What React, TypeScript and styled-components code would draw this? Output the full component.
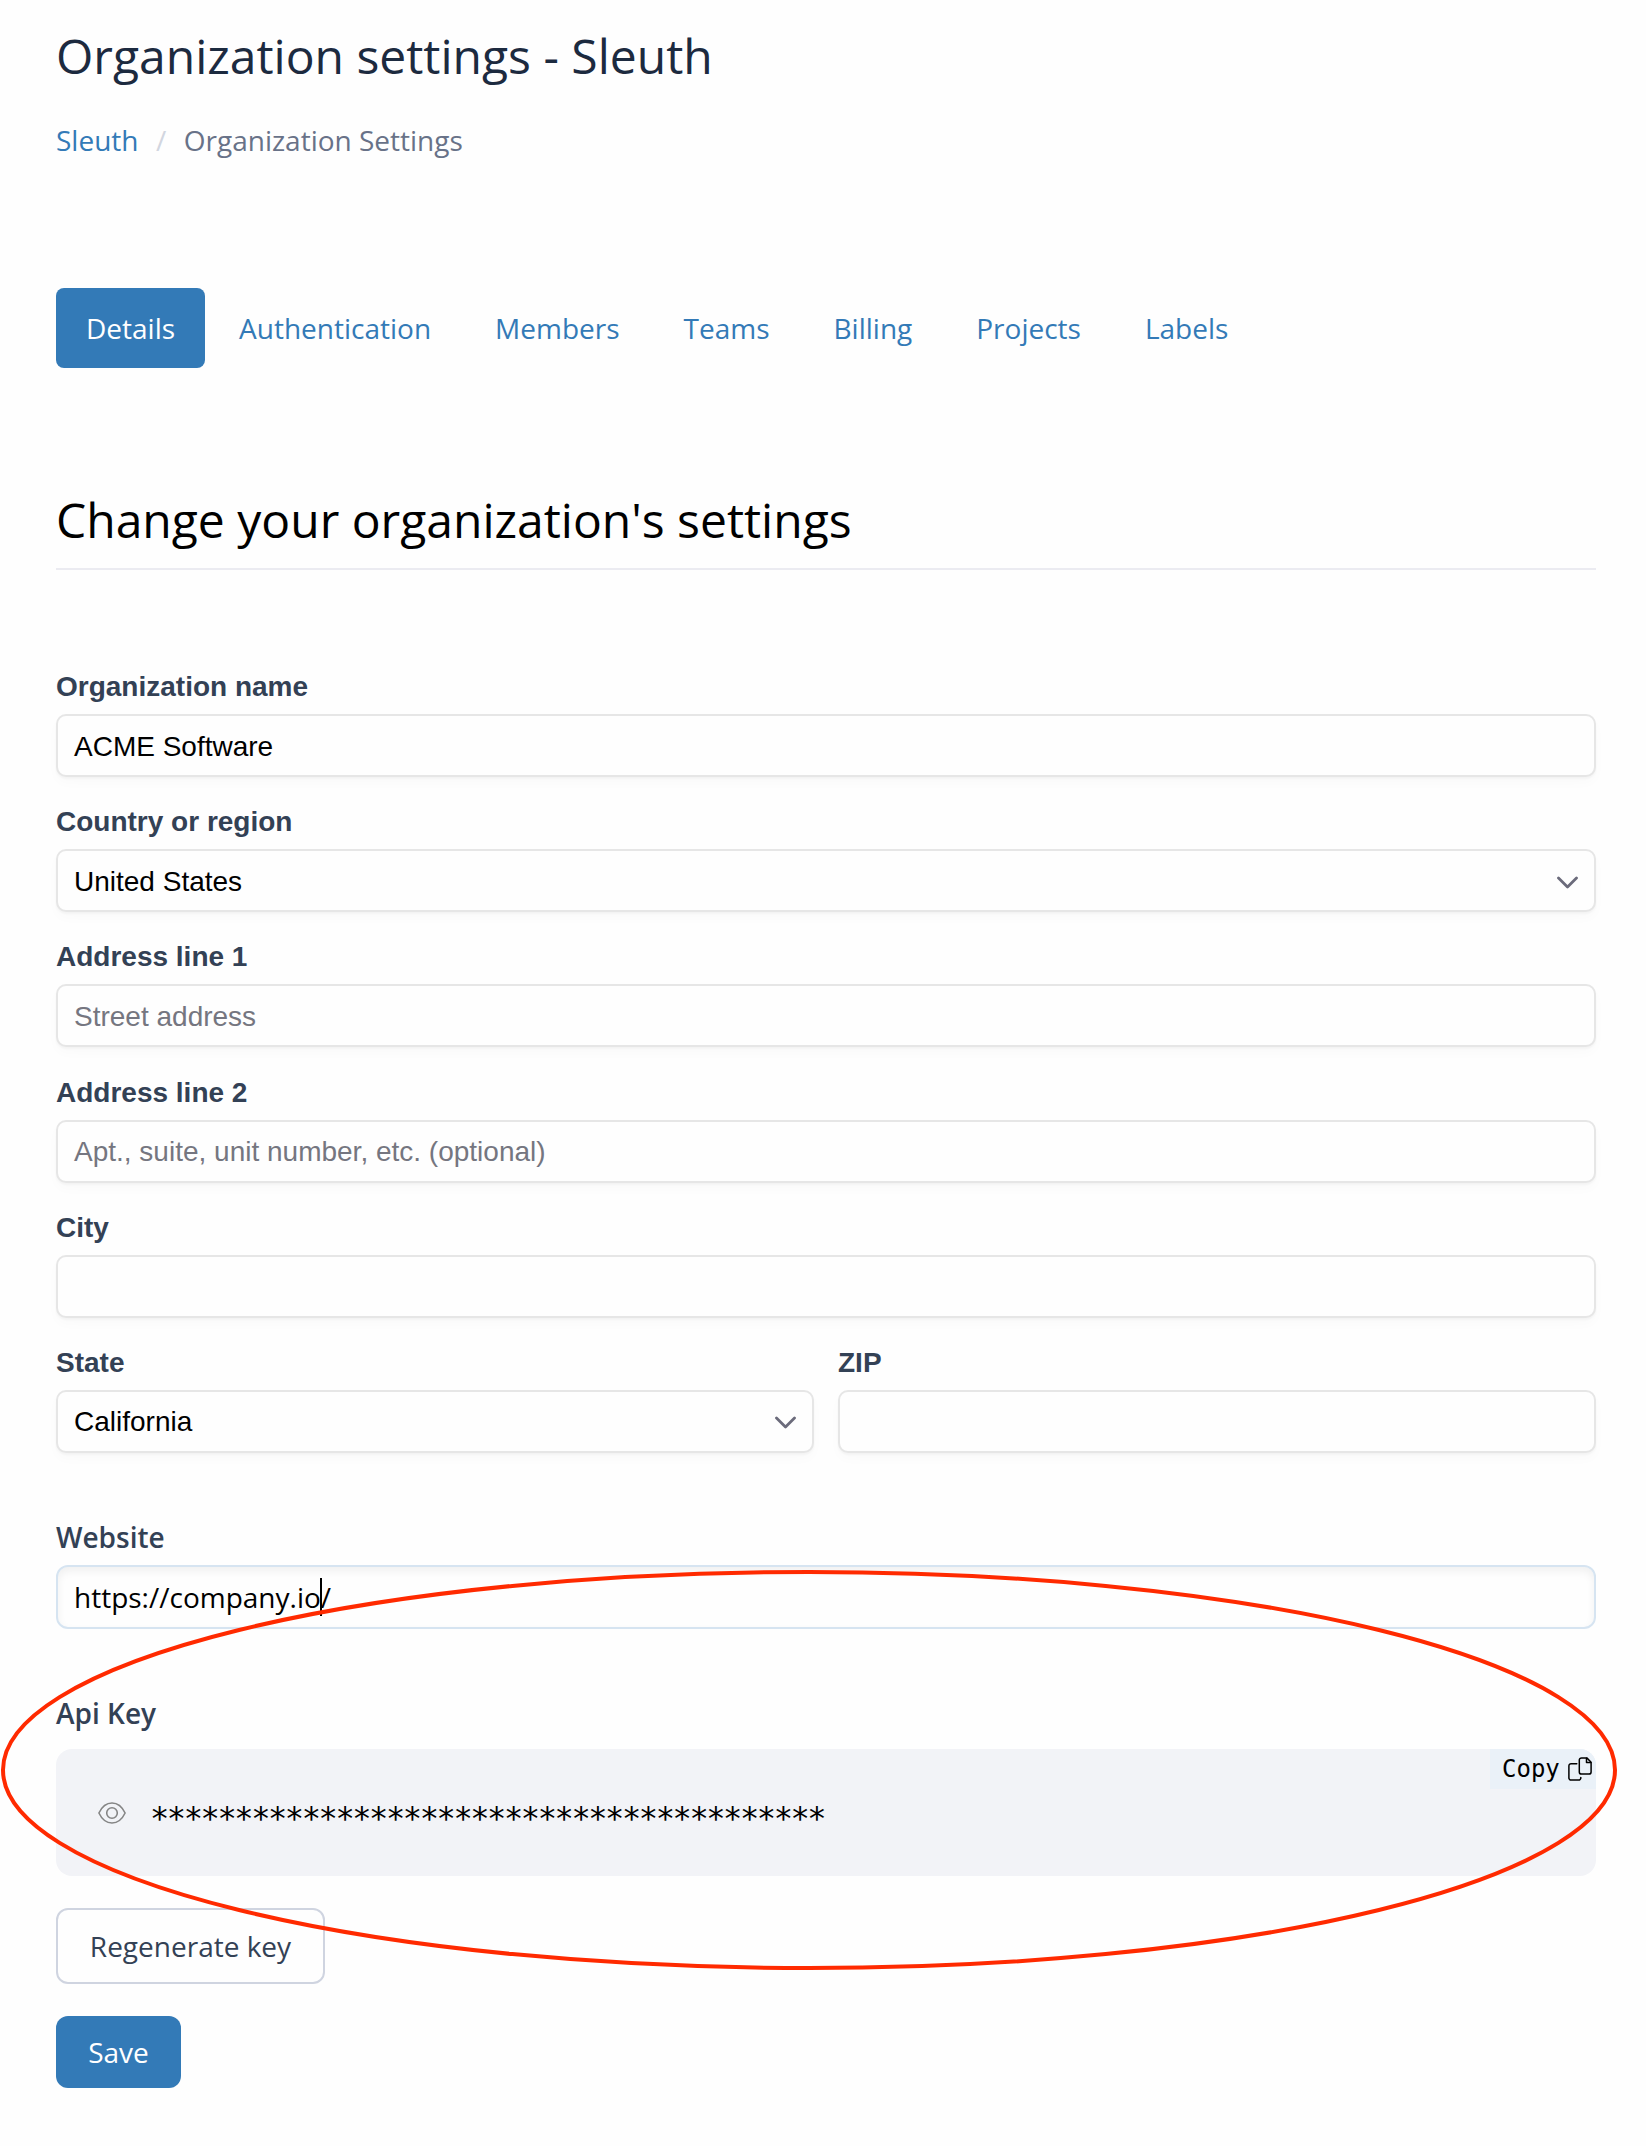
import React from 'react';
import styled, { createGlobalStyle } from 'styled-components';

const GlobalStyle = createGlobalStyle`
  *, *::before, *::after { box-sizing: border-box; }
  body { margin: 0; background: #fefefe; }
`;

const sans = `"Open Sans", sans-serif`;
const helvetica = `"Liberation Sans", Arial, sans-serif`;
const mono = `"DejaVu Sans Mono", monospace`;

const Page = styled.div`
  position: relative;
  display: flex;
  flex-direction: column;
  height: 2146px;
  padding: 23px 50px 0 56px;
  overflow: hidden;
  font-family: ${sans};
  font-size: 28px;
  color: #000;
`;

const Title = styled.h1`
  margin: 0;
  font-size: 48px;
  line-height: 65px;
  font-weight: 400;
  color: #1c2a3f;
`;

const Breadcrumb = styled.nav`
  display: flex;
  margin-top: 33px;
  line-height: 38px;
  color: #687288;
`;

const Crumb = styled.a`
  color: #337ab7;
`;

const Slash = styled.span`
  margin: 0 17.5px;
  color: #d2d6e0;
`;

const Tabs = styled.nav`
  display: flex;
  gap: 4px;
  margin-top: 129px;
`;

const Tab = styled.a<{ $active?: boolean }>`
  display: flex;
  align-items: center;
  height: 80px;
  padding: 0 30px;
  border-radius: 8px;
  background: ${(p) => (p.$active ? '#337ab7' : 'transparent')};
  color: ${(p) => (p.$active ? '#fff' : '#337ab7')};
`;

const Heading = styled.h2`
  margin: 119px 0 0;
  height: 83px;
  border-bottom: 2px solid #ebebf1;
  font-size: 48px;
  line-height: 65px;
  font-weight: 400;
`;

const AddressForm = styled.form`
  display: flex;
  flex-direction: column;
  gap: 29.2px;
  margin-top: 101px;
  font-family: ${helvetica};
`;

const Row = styled.div`
  display: grid;
  grid-template-columns: 1fr 1fr;
  gap: 24px;
`;

const FieldBox = styled.label`
  display: flex;
  flex-direction: column;
`;

const AddressLabel = styled.span`
  height: 43px;
  line-height: 32px;
  font-weight: 700;
  color: #334155;
`;

const AddressInput = styled.span<{ $muted?: boolean }>`
  display: flex;
  align-items: center;
  justify-content: space-between;
  height: 63px;
  padding: 2px 16px 0;
  border: 2px solid #e6e6e6;
  border-radius: 10px;
  background: #fefefe;
  box-shadow: 0 2px 2px rgba(0, 0, 0, 0.03), 0 6px 12px rgba(0, 0, 0, 0.02);
  color: ${(p) => (p.$muted ? '#757680' : '#000')};
`;

const PlainField = styled.div`
  display: flex;
  flex-direction: column;
`;

const PlainLabel = styled.span`
  line-height: 38px;
  font-weight: 600;
  color: #334155;
`;

const WebsiteInput = styled.div`
  display: flex;
  align-items: center;
  height: 64px;
  margin-top: 9px;
  padding: 0 16px;
  border: 2px solid #d6e4f1;
  border-radius: 12px;
  background: #fefefe;
  box-shadow: inset 0 4px 8px rgba(0, 0, 0, 0.06);
`;

const Caret = styled.span`
  width: 2px;
  height: 38px;
  margin: 0 -1px;
  background: #000;
`;

const KeyPanel = styled.div`
  position: relative;
  display: flex;
  align-items: center;
  height: 127px;
  margin-top: 17px;
  padding: 1px 0 0 42px;
  border-radius: 16px;
  overflow: hidden;
  background: #f2f3f7;
  font-family: ${mono};
`;

const KeyText = styled.span`
  margin-left: 24px;
  padding-top: 10px;
  font-size: 32px;
  letter-spacing: -2.41px;
`;

const CopyButton = styled.button`
  position: absolute;
  top: 0;
  right: 0;
  display: flex;
  align-items: center;
  justify-content: space-between;
  width: 106px;
  height: 40px;
  padding: 0 4px 0 12px;
  border: 0;
  background: #eaf1f8;
  color: #000;
  font-family: ${mono};
  font-size: 24px;
`;

const Button = styled.button<{ $primary?: boolean }>`
  align-self: flex-start;
  width: ${(p) => (p.$primary ? '125px' : '269px')};
  height: ${(p) => (p.$primary ? '72px' : '76px')};
  margin-top: 32px;
  padding: 0;
  border: ${(p) => (p.$primary ? '0' : '2px solid #cfd4e0')};
  border-radius: 12px;
  background: ${(p) => (p.$primary ? '#337ab7' : '#fefefe')};
  color: ${(p) => (p.$primary ? '#fff' : '#334155')};
  font-family: ${sans};
  font-size: 28px;
`;

const Highlight = styled.svg`
  position: absolute;
  left: 0;
  top: 1568px;
  pointer-events: none;
`;

const Chevron = () => (
  <svg width="22" height="18" viewBox="0 0 22 18" fill="none" stroke="#6b6b7b" strokeWidth="2.8" strokeLinecap="round" strokeLinejoin="round">
    <path d="M2.500 5 11.500 14 20.500 5" />
  </svg>
);

const EyeIcon = () => (
  <svg width="28" height="22" viewBox="0 0 28 22" fill="none" stroke="#858585" strokeWidth="1.6" strokeLinejoin="round">
    <path d="M.9 11C4 4.500 8.500 1 14 1s10 3.500 13.100 10C24 17.500 19.500 21 14 21S4 17.500.9 11Z" />
    <circle cx="14" cy="11" r="5.300" />
  </svg>
);

const CopyIcon = () => (
  <svg width="24" height="24" viewBox="0 0 24 24" fill="none" stroke="#000" strokeWidth="1.500" strokeLinecap="round" strokeLinejoin="round">
    <path d="M13.500.9h5.300l4.300 4.300v9.700a2.200 2.200 0 0 1-2.200 2.200h-7.400a2.200 2.200 0 0 1-2.200-2.200V3.100A2.200 2.200 0 0 1 13.500.9Z" />
    <path d="M18.500 1.200v4.300h4.300M8.800 6.700H3.100A2.200 2.200 0 0 0 .9 8.900v12a2.200 2.200 0 0 0 2.200 2.200h7.500a2.200 2.200 0 0 0 2.200-2.200v-.5" />
  </svg>
);

type FieldProps = { label: string; value?: string; placeholder?: string; select?: boolean };

const Field = ({ label, value, placeholder, select }: FieldProps) => (
  <FieldBox>
    <AddressLabel>{label}</AddressLabel>
    <AddressInput $muted={!value}>
      <span>{value ?? placeholder}</span>
      {select && <Chevron />}
    </AddressInput>
  </FieldBox>
);

const tabs = ['Details', 'Authentication', 'Members', 'Teams', 'Billing', 'Projects', 'Labels'];

const WebsiteField = styled(PlainField)`
  margin-top: 65px;
`;

const KeyField = styled(PlainField)`
  margin-top: 65px;
`;

export default function App() {
  return (
    <>
      <GlobalStyle />
      <Page>
        <Title>Organization settings - Sleuth</Title>
        <Breadcrumb>
          <Crumb>Sleuth</Crumb>
          <Slash>/</Slash>
          <span>Organization Settings</span>
        </Breadcrumb>
        <Tabs>
          {tabs.map((tab, i) => (
            <Tab key={tab} $active={i === 0}>{tab}</Tab>
          ))}
        </Tabs>
        <Heading>Change your organization's settings</Heading>
        <AddressForm>
          <Field label="Organization name" value="ACME Software" />
          <Field label="Country or region" value="United States" select />
          <Field label="Address line 1" placeholder="Street address" />
          <Field label="Address line 2" placeholder="Apt., suite, unit number, etc. (optional)" />
          <Field label="City" />
          <Row>
            <Field label="State" value="California" select />
            <Field label="ZIP" />
          </Row>
        </AddressForm>
        <WebsiteField>
          <PlainLabel>Website</PlainLabel>
          <WebsiteInput>
            <span>https://company.io</span>
            <Caret />
            <span>/</span>
          </WebsiteInput>
        </WebsiteField>
        <KeyField>
          <PlainLabel>Api Key</PlainLabel>
          <KeyPanel>
            <EyeIcon />
            <KeyText>{'*'.repeat(40)}</KeyText>
            <CopyButton>
              Copy
              <CopyIcon />
            </CopyButton>
          </KeyPanel>
        </KeyField>
        <Button>Regenerate key</Button>
        <Button $primary>Save</Button>
        <Highlight width="1620" height="404" viewBox="0 0 1620 404">
          <ellipse cx="809" cy="202" rx="806" ry="198" fill="none" stroke="#ff2a00" strokeWidth="4" />
        </Highlight>
      </Page>
    </>
  );
}
